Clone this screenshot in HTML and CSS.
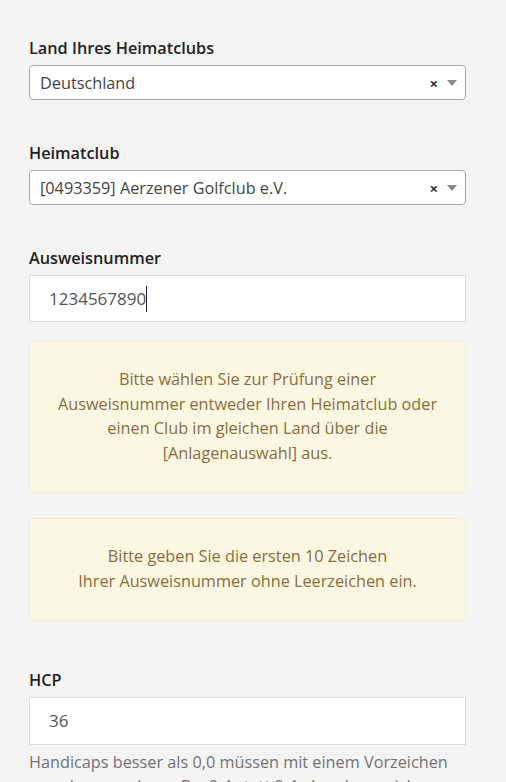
FILE: index.html
```html
<!DOCTYPE html>
<html lang="de">
<head>
<meta charset="utf-8">
<link rel="stylesheet" href="styles.css">
</head>
<body>
<form class="form">
  <div class="group">
    <label class="label">Land Ihres Heimatclubs</label>
    <div class="select">
      <span class="select-value">Deutschland</span>
      <span class="select-clear">×</span>
      <span class="select-arrow"></span>
    </div>
  </div>

  <div class="group">
    <label class="label">Heimatclub</label>
    <div class="select">
      <span class="select-value">[0493359] Aerzener Golfclub e.V.</span>
      <span class="select-clear">×</span>
      <span class="select-arrow"></span>
    </div>
  </div>

  <div class="group group-tight">
    <label class="label">Ausweisnummer</label>
    <div class="input"><span class="input-text">1234567890</span><span class="caret"></span></div>
  </div>

  <div class="alert alert-first">
    Bitte wählen Sie zur Prüfung einer<br>
    Ausweisnummer entweder Ihren Heimatclub oder<br>
    einen Club im gleichen Land über die<br>
    [Anlagenauswahl] aus.
  </div>

  <div class="alert alert-second">
    Bitte geben Sie die ersten 10 Zeichen<br>
    Ihrer Ausweisnummer ohne Leerzeichen ein.
  </div>

  <div class="group group-hcp">
    <label class="label">HCP</label>
    <div class="input input-hcp"><span class="input-text">36</span></div>
    <p class="help">Handicaps besser als 0,0 müssen mit einem Vorzeichen versehen werden, z.B. +2,4 statt 2,4 ohne Leerzeichen.</p>
  </div>
</form>
</body>
</html>
```

FILE: styles.css
```css
html, body {
  margin: 0;
  padding: 0;
  background: #f4f4f4;
}

body {
  font-family: "Open Sans", "Liberation Sans", sans-serif;
  font-size: 16.25px;
  color: #333;
  overflow: hidden;
  height: 782px;
}

.form {
  padding: 37px 40px 0 29px;
  width: 437px;
  display: flex;
  flex-direction: column;
}

.group {
  display: flex;
  flex-direction: column;
  margin-bottom: 42px;
}

.group-tight {
  margin-bottom: 19px;
}

.label {
  display: block;
  font-weight: 600;
  font-size: 16.25px;
  line-height: 22px;
  color: #222;
  margin-bottom: 6px;
}

.select {
  box-sizing: border-box;
  height: 35px;
  background: #fff;
  border: 1px solid #aaa;
  border-radius: 4px;
  display: flex;
  align-items: center;
  padding: 0 8px 0 10px;
}

.select-value {
  flex: 1;
  color: #444;
  font-size: 16.25px;
  line-height: 22px;
  white-space: nowrap;
  overflow: hidden;
}

.select-clear {
  font-weight: 700;
  font-size: 15px;
  color: #333;
  margin-right: 9px;
  line-height: 1;
  position: relative;
  top: 1px;
}

.select-arrow {
  width: 0;
  height: 0;
  border-style: solid;
  border-width: 6px 5px 0 5px;
  border-color: #888 transparent transparent transparent;
}

.input {
  box-sizing: border-box;
  height: 47px;
  background: #fff;
  border: 1px solid #ddd;
  display: flex;
  align-items: center;
  padding: 0 19px;
}

.input-hcp {
  height: 48px;
}

.input-text {
  color: #555;
  font-size: 17px;
  line-height: 22px;
}

.caret {
  display: inline-block;
  width: 1px;
  height: 26px;
  background: #222;
}

.alert {
  box-sizing: border-box;
  background: #fcf7e3;
  border: 1px solid #faebcc;
  border-radius: 4px;
  color: #8a6d3b;
  text-align: center;
  font-size: 16.25px;
  line-height: 24.6px;
}

.alert-first {
  padding: 25px 15px 27px;
  margin-bottom: 25px;
}

.alert-second {
  padding: 25px 15px 26px;
  margin-bottom: 48px;
}

.group-hcp {
  margin-bottom: 0;
}

.help {
  margin: 5px 0 0;
  color: #737373;
  font-size: 16.25px;
  line-height: 24px;
}
```
